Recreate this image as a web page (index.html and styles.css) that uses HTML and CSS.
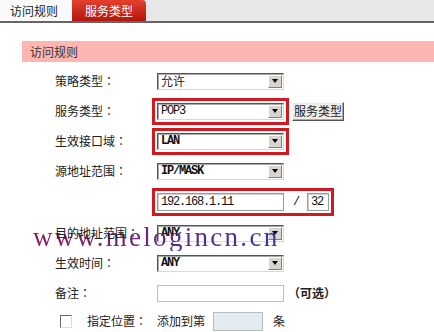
FILE: index.html
```html
<!DOCTYPE html>
<html lang="zh-CN">
<head>
  <meta charset="UTF-8" />
  <title>访问规则</title>
  <link rel="stylesheet" href="styles.css">
</head>
<body>

  <!-- Tabs -->
  <div class="tabs">
    <div class="tab">访问规则</div>
    <div class="tab active">服务类型</div>
  </div>

  <div class="panel">
    <div class="panel-title">访问规则</div>

    <div class="form">
      <div class="row">
        <span class="label">策略类型：</span>
        <div class="select"><span class="val">允许</span><span class="arrow"></span></div>
      </div>

      <div class="row">
        <span class="label">服务类型：</span>
        <div class="hl">
          <div class="select"><span class="val mono">POP3</span><span class="arrow"></span></div>
        </div>
        <div class="btn">服务类型</div>
      </div>

      <div class="row">
        <span class="label">生效接口域：</span>
        <div class="hl">
          <div class="select"><span class="val mono bold">LAN</span><span class="arrow"></span></div>
        </div>
      </div>

      <div class="row">
        <span class="label">源地址范围：</span>
        <div class="select"><span class="val mono bold">IP/MASK</span><span class="arrow"></span></div>
      </div>

      <div class="row tall">
        <span class="label"></span>
        <div class="hl">
          <div class="text-input mono">192.168.1.11</div>
          <span class="slash mono">/</span>
          <div class="text-input small mono">32</div>
        </div>
      </div>

      <div class="row">
        <span class="label over">目的地址范围：</span>
        <div class="select"><span class="val mono bold">ANY</span><span class="arrow"></span></div>
      </div>

      <div class="row">
        <span class="label">生效时间：</span>
        <div class="select"><span class="val mono bold">ANY</span><span class="arrow"></span></div>
      </div>

      <div class="row">
        <span class="label">备注：</span>
        <div class="text-input note"></div>
        <span class="optional">（可选）</span>
      </div>

      <div class="row short">
        <span class="label check-label"><span class="checkbox"></span>指定位置：</span>
        <span>添加到第</span>
        <div class="text-input pos"></div>
        <span class="unit">条</span>
      </div>
    </div>
  </div>

  <!-- watermark -->
  <div class="watermark">www.melogincn.cn</div>

</body>
</html>
```

FILE: styles.css
```css
body {
  margin: 0;
  width: 434px;
  height: 332px;
  overflow: hidden;
  position: relative;
  background: #fff;
  font-family: "Noto Sans CJK JP", "Noto Sans CJK SC", sans-serif;
  font-feature-settings: "locl" 0;
  font-size: 12px;
  line-height: 1;
  color: #222;
}

.tabs {
  display: flex;
  height: 21px;
  background: #e8e8e8;
  border-bottom: 2px solid #666;
}

.tab {
  width: 72px;
  box-sizing: border-box;
  padding-left: 10px;
  display: flex;
  align-items: center;
  background: #fafafa;
  color: #222;
}

.tab.active {
  width: 74px;
  padding-left: 13px;
  color: #fff;
  background: linear-gradient(#e4412d, #b3170f);
  border-radius: 0 4px 0 0;
}

.panel {
  margin: 18px 0 0 22px;
}

.panel-title {
  height: 21px;
  padding-left: 8px;
  display: flex;
  align-items: center;
  background: #ffb6b2;
  color: #333;
}

.form {
  display: flex;
  flex-direction: column;
  padding: 4px 0 0 33px;
}

.row {
  display: flex;
  align-items: center;
  height: 30px;
}

.row.tall {
  height: 32px;
}

.row.short {
  height: 26px;
}

.label {
  width: 102px;
  flex-shrink: 0;
}

.label.over {
  position: relative;
  z-index: 2;
}

.mono {
  font-family: "Liberation Mono", monospace;
  font-size: 12px;
  letter-spacing: -1.2px;
  color: #111;
}

.bold {
  font-weight: bold;
}

.select {
  width: 127px;
  height: 17px;
  box-sizing: border-box;
  display: flex;
  align-items: center;
  background: #fff;
  border: 1px solid;
  border-color: #555 #d8d8d8 #d8d8d8 #555;
  box-shadow: inset 1px 1px #a8a8a8;
}

.val {
  flex: 1;
  padding-left: 3px;
}

.arrow {
  width: 14px;
  height: 13px;
  margin-right: 1px;
  box-sizing: border-box;
  display: flex;
  align-items: center;
  justify-content: center;
  background: #d8d5d0;
  border: 1px solid;
  border-color: #fff #808080 #808080 #fff;
}

.arrow::after {
  content: "";
  border-left: 3px solid transparent;
  border-right: 3px solid transparent;
  border-top: 4px solid #000;
}

.hl {
  display: flex;
  align-items: center;
  border: 3px solid #d1191f;
  padding: 2px;
  margin-left: -5px;
}

.btn {
  margin-left: 3px;
  height: 19px;
  width: 52px;
  box-sizing: border-box;
  display: flex;
  align-items: center;
  justify-content: center;
  background: #efede9;
  border: 1px solid;
  border-color: #f8f8f8 #555 #555 #f8f8f8;
  box-shadow: inset -1px -1px #aaa;
  color: #222;
}

.text-input {
  width: 127px;
  height: 18px;
  box-sizing: border-box;
  display: flex;
  align-items: center;
  padding-left: 3px;
  background: #fff;
  border: 1px solid #9a9a9a;
  box-shadow: inset 1px 1px #d0d0d0;
}

.text-input.small {
  width: 22px;
}

.slash {
  margin: 0 8px 0 9px;
}

.text-input.note {
  height: 17px;
  border-color: #c6bcb2;
  box-shadow: none;
}

.optional {
  margin-left: 4px;
  font-weight: bold;
}

.check-label {
  display: flex;
  align-items: center;
}

.checkbox {
  width: 12px;
  height: 13px;
  box-sizing: border-box;
  margin: 0 15px 0 5px;
  border: 1px solid;
  border-color: #666 #ddd #ddd #666;
  background: #fff;
}

.text-input.pos {
  width: 50px;
  height: 19px;
  margin-left: 8px;
  background: #e3ebef;
  border-color: #b4bcc0;
  box-shadow: none;
}

.unit {
  margin-left: 10px;
}

.watermark {
  position: absolute;
  left: 33px;
  top: 224px;
  font-family: "Liberation Serif", serif;
  font-size: 27px;
  line-height: 27px;
  letter-spacing: 2.3px;
  background: linear-gradient(90deg, #8e1a5a, #3a36a8);
  -webkit-background-clip: text;
  background-clip: text;
  color: transparent;
}
```
